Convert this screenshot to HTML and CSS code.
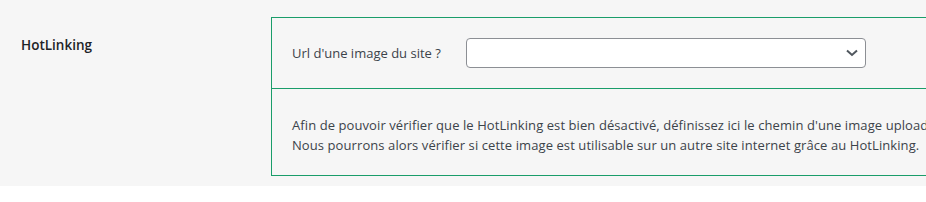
FILE: index.html
```html
<!DOCTYPE html>
<html lang="fr">
<head>
<meta charset="utf-8">
<link rel="stylesheet" href="styles.css">
</head>
<body>
<div class="row">
  <div class="th">HotLinking</div>
  <div class="box">
    <div class="field">
      <label class="flabel">Url d'une image du site ?</label>
      <div class="select">
        <svg class="chev" width="14" height="10" viewBox="0 0 14 10"><path d="M2 2.5 L7 7 L12 2.5" fill="none" stroke="#50575e" stroke-width="2"/></svg>
      </div>
    </div>
    <div class="desc">
      <p>Afin de pouvoir vérifier que le HotLinking est bien désactivé, définissez ici le chemin d'une image uploadée sur votre site.</p>
      <p>Nous pourrons alors vérifier si cette image est utilisable sur un autre site internet grâce au HotLinking.</p>
    </div>
  </div>
</div>
</body>
</html>
```

FILE: styles.css
```css
html, body { margin: 0; padding: 0; background: #fff; overflow: hidden; }
body { font-family: "Open Sans", "Noto Sans", sans-serif; font-size: 13px; color: #3c434a; }
.row { display: flex; background: #f6f6f6; padding: 17px 0 10px 0; height: 159px; box-sizing: content-box; }
.th { width: 250px; flex: none; padding-left: 21px; padding-top: 18px; font-size: 13.5px; font-weight: 600; color: #1d2327; line-height: 21px; }
.box { flex: none; width: 720px; border: 1px solid #1a9d6a; border-right: none; overflow: hidden; }
.field { display: flex; align-items: center; padding: 20px 0 20px 20px; border-bottom: 1px solid #1a9d6a; }
.flabel { width: 174px; flex: none; line-height: 20px; }
.select { width: 400px; height: 30px; box-sizing: border-box; border: 1px solid #8c8f94; border-radius: 4px; background: #fff; display: flex; align-items: center; justify-content: flex-end; padding-right: 6px; }
.chev { display: block; }
.desc { padding: 26px 0 19px 20px; }
.desc p { margin: 0; line-height: 20px; white-space: nowrap; letter-spacing: 0.085px; }
```
